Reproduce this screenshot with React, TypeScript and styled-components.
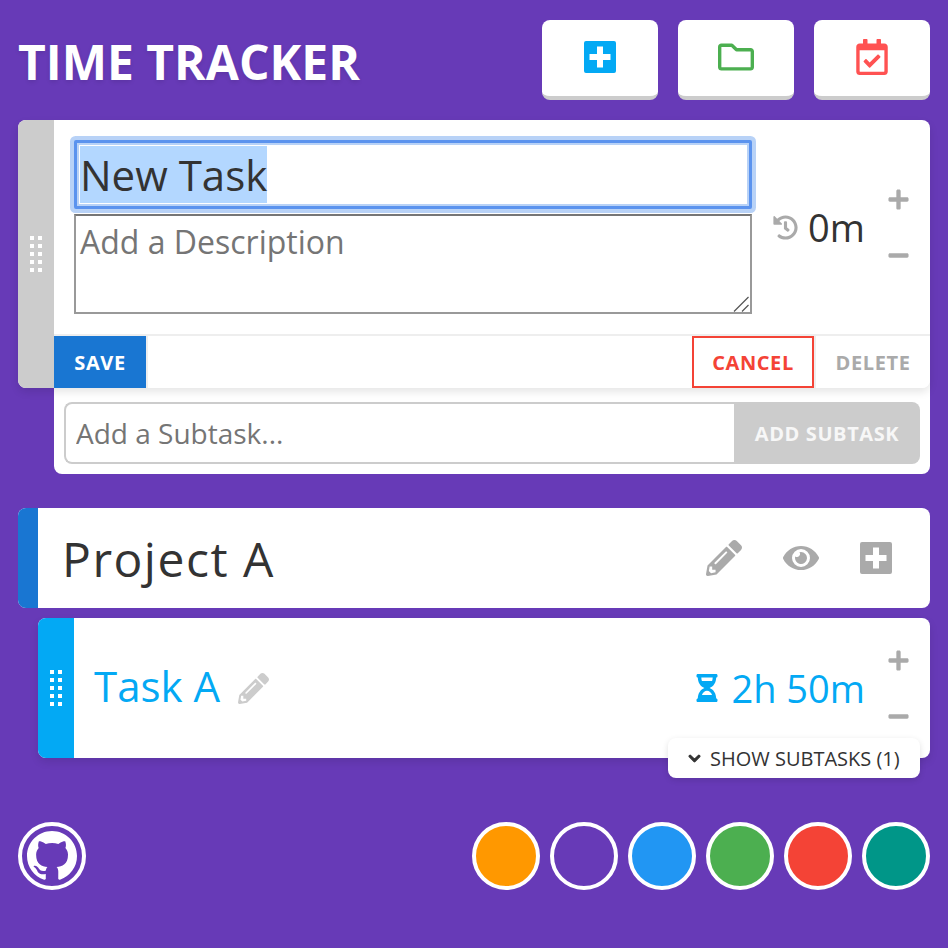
import React, { useEffect, useRef } from 'react';
import styled, { createGlobalStyle } from 'styled-components';
import {
  FaRegFolder,
  FaRegCalendarCheck,
  FaHistory,
  FaPlus,
  FaMinus,
  FaPencilAlt,
  FaEye,
  FaHourglassHalf,
  FaChevronDown,
} from 'react-icons/fa';

const SWATCHES = ['#ff9800', '#673ab7', '#2196f3', '#4caf50', '#f44336', '#009688'];

const GITHUB_MARK =
  'M8 0C3.58 0 0 3.58 0 8c0 3.54 2.29 6.53 5.47 7.59.4.07.55-.17.55-.38 0-.19-.01-.82-.01-1.49-2.01.37-2.53-.49-2.69-.94-.09-.23-.48-.94-.82-1.13-.28-.15-.68-.52-.01-.53.63-.01 1.08.58 1.23.82.72 1.21 1.87.87 2.33.66.07-.52.28-.87.51-1.07-1.78-.2-3.64-.89-3.64-3.95 0-.87.31-1.59.82-2.15-.08-.2-.36-1.02.08-2.12 0 0 .67-.21 2.2.82.64-.18 1.32-.27 2-.27.68 0 1.36.09 2 .27 1.53-1.04 2.2-.82 2.2-.82.44 1.1.16 1.92.08 2.12.51.56.82 1.27.82 2.15 0 3.07-1.87 3.75-3.65 3.95.29.25.54.73.54 1.48 0 1.07-.01 1.93-.01 2.2 0 .21.15.46.55.38A8.013 8.013 0 0016 8c0-4.42-3.58-8-8-8z';

const PLUS_SQUARE =
  'M2 0h28a2 2 0 012 2v28a2 2 0 01-2 2H2a2 2 0 01-2-2V2a2 2 0 012-2zM13 5.5v7.5H5.5v6H13v7.5h6V19h7.5v-6H19V5.500z';

const PlusSquare: React.FC = () => (
  <svg viewBox="0 0 32 32" width="32" height="32" fill="currentColor">
    <path fillRule="evenodd" d={PLUS_SQUARE} />
  </svg>
);

const App: React.FC = () => {
  const titleRef = useRef<HTMLInputElement>(null);

  useEffect(() => {
    titleRef.current?.focus();
    titleRef.current?.select();
  }, []);

  return (
    <Page>
      <GlobalStyle />
      <Header>
        <Title>TIME TRACKER</Title>
        <HeaderButtons>
          <HeaderButton $color="#03a9f4">
            <PlusSquare />
          </HeaderButton>
          <HeaderButton $color="#4caf50">
            <FaRegFolder />
          </HeaderButton>
          <HeaderButton $color="#ff5252">
            <FaRegCalendarCheck />
          </HeaderButton>
        </HeaderButtons>
      </Header>

      <EditGroup>
        <EditCard>
          <Handle $color="#ccc" $width={36}>
            <DragDots />
          </Handle>
          <EditBody>
            <EditMain>
              <Fields>
                <TitleInput ref={titleRef} defaultValue="New Task" />
                <DescriptionWrap>
                  <Description placeholder="Add a Description" />
                  <ResizeGrip viewBox="0 0 16 16" width="16" height="16">
                    <path d="M1 15.5 15.5 1M9 15.5l6.5-6.5" />
                  </ResizeGrip>
                </DescriptionWrap>
              </Fields>
              <TimeBox>
                <HistoryIcon />
                <TimeText>0m</TimeText>
                <Stepper />
              </TimeBox>
            </EditMain>
            <ActionBar>
              <SaveButton>SAVE</SaveButton>
              <CancelButton>CANCEL</CancelButton>
              <DeleteButton>DELETE</DeleteButton>
            </ActionBar>
          </EditBody>
        </EditCard>
        <SubtaskPanel>
          <SubtaskForm>
            <SubtaskInput placeholder="Add a Subtask..." />
            <SubtaskButton>ADD SUBTASK</SubtaskButton>
          </SubtaskForm>
        </SubtaskPanel>
      </EditGroup>

      <ProjectCard>
        <Handle $color="#1976d2" $width={20} />
        <ProjectName>Project A</ProjectName>
        <ProjectIcons>
          <FaPencilAlt />
          <FaEye />
          <PlusSquare />
        </ProjectIcons>
      </ProjectCard>

      <TaskCard>
        <Handle $color="#03a9f4" $width={36}>
          <DragDots />
        </Handle>
        <TaskBody>
          <TaskName>Task A</TaskName>
          <TaskEdit />
          <TaskTime>
            <FaHourglassHalf />
            <TimeText $color="#03a9f4">2h 50m</TimeText>
          </TaskTime>
          <Stepper />
        </TaskBody>
        <ShowSubtasks>
          <FaChevronDown />
          SHOW SUBTASKS (1)
        </ShowSubtasks>
      </TaskCard>

      <Footer>
        <GithubLink>
          <svg viewBox="0 0 16 16" width="50" height="50" fill="currentColor">
            <path fillRule="evenodd" d={GITHUB_MARK} />
          </svg>
        </GithubLink>
        <Swatches>
          {SWATCHES.map((color) => (
            <Swatch key={color} $color={color} />
          ))}
        </Swatches>
      </Footer>
    </Page>
  );
};

const DragDots: React.FC = () => (
  <DotGrid>
    {Array.from({ length: 10 }, (_, i) => (
      <Dot key={i} />
    ))}
  </DotGrid>
);

const Stepper: React.FC = () => (
  <StepperBox>
    <FaPlus />
    <FaMinus />
  </StepperBox>
);

export default App;

const GlobalStyle = createGlobalStyle`
  html, body {
    margin: 0;
    padding: 0;
    background: #673ab7;
    font-family: "Open Sans", "Liberation Sans", sans-serif;
    color: #333;
  }
  * {
    box-sizing: border-box;
  }
  ::selection {
    background: #b3d7ff;
  }
`;

const Page = styled.div`
  width: 948px;
  height: 948px;
  padding: 20px 18px 0;
  overflow: hidden;
  background: #673ab7;
`;

const Header = styled.header`
  display: flex;
  justify-content: space-between;
  align-items: flex-start;
  height: 100px;
`;

const Title = styled.h1`
  margin: 0;
  font-size: 48px;
  line-height: 84px;
  font-weight: 700;
  color: #fff;
  text-shadow: 0 2px 4px rgba(0, 0, 0, 0.1);
`;

const HeaderButtons = styled.div`
  display: flex;
  gap: 20px;
`;

const HeaderButton = styled.button<{ $color: string }>`
  display: flex;
  align-items: center;
  justify-content: center;
  width: 116px;
  height: 80px;
  padding: 0 0 3px;
  background: #fff;
  border: 0;
  border-bottom: 4px solid #ccc;
  border-radius: 8px;
  color: ${(p) => p.$color};
  font-size: 36px;

  svg {
    display: block;
  }
`;

const EditGroup = styled.section`
  margin-bottom: 34px;
`;

const EditCard = styled.div`
  position: relative;
  z-index: 1;
  display: flex;
  height: 268px;
  background: #fff;
  border-radius: 8px;
  overflow: hidden;
  box-shadow: 0 4px 8px rgba(0, 0, 0, 0.1);
`;

const Handle = styled.div<{ $color: string; $width: number }>`
  display: flex;
  align-items: center;
  justify-content: center;
  flex: none;
  width: ${(p) => p.$width}px;
  align-self: stretch;
  background: ${(p) => p.$color};
`;

const DotGrid = styled.div`
  display: grid;
  grid-template-columns: 4px 4px;
  grid-auto-rows: 4px;
  gap: 4px;
`;

const Dot = styled.span`
  background: #fff;
`;

const EditBody = styled.div`
  display: flex;
  flex-direction: column;
  flex: 1;
  min-width: 0;
`;

const EditMain = styled.div`
  display: flex;
  flex: 1;
  padding: 20px 0 0 20px;
  border-bottom: 2px solid #eee;
`;

const Fields = styled.div`
  display: flex;
  flex-direction: column;
  gap: 5px;
  width: 678px;
`;

const TitleInput = styled.input`
  width: 100%;
  height: 69px;
  padding: 0 3px;
  border: 3px solid #5b93ee;
  border-radius: 2px;
  outline: none;
  box-shadow: 0 0 0 4px #b8d2f7, inset 0 0 0 2px #b8d2f7;
  font-family: inherit;
  font-size: 42px;
  color: #333;
`;

const DescriptionWrap = styled.div`
  position: relative;
`;

const Description = styled.textarea`
  display: block;
  width: 100%;
  height: 100px;
  padding: 4px 4px 0;
  border: 2px solid #999;
  border-top-color: #767676;
  border-radius: 0;
  outline: none;
  resize: none;
  font-family: inherit;
  font-size: 32px;
  color: #333;

  &::placeholder {
    color: #757575;
  }
`;

const ResizeGrip = styled.svg`
  position: absolute;
  right: 3px;
  bottom: 2px;
  fill: none;
  stroke: #555;
  stroke-width: 1.2;
`;

const TimeBox = styled.div`
  display: flex;
  align-items: center;
  flex: 1;
  min-width: 0;
  height: 140px;
  margin-top: 17px;
  padding-left: 21px;
`;

const HistoryIcon = styled(FaHistory)`
  flex: none;
  margin-right: 10px;
  font-size: 25px;
  color: #aaa;
`;

const TimeText = styled.span<{ $color?: string }>`
  font-size: 38px;
  color: ${(p) => p.$color ?? '#333'};
`;

const StepperBox = styled.div`
  display: flex;
  flex-direction: column;
  justify-content: space-between;
  align-items: center;
  margin-left: 22px;
  margin-right: 20px;
  height: 79px;
  font-size: 23px;
  color: #aaa;
`;

const ActionBar = styled.div`
  display: flex;
  height: 52px;
  font-size: 20px;
  font-weight: 700;
  letter-spacing: 0.6px;
`;

const ActionButton = styled.button`
  height: 100%;
  padding: 0;
  border: 0;
  background: #fff;
  font-family: inherit;
  font-size: inherit;
  font-weight: inherit;
  letter-spacing: inherit;
`;

const SaveButton = styled(ActionButton)`
  width: 94px;
  margin-right: auto;
  border-right: 2px solid #eee;
  background: #1976d2;
  background-clip: padding-box;
  color: #fff;
`;

const CancelButton = styled(ActionButton)`
  width: 122px;
  border: 2px solid #f44336;
  color: #f44336;
`;

const DeleteButton = styled(ActionButton)`
  width: 116px;
  border-left: 2px solid #eee;
  color: #aaa;
`;

const SubtaskPanel = styled.div`
  margin: -10px 0 0 36px;
  padding: 24px 10px 10px;
  background: #fff;
  border-radius: 0 0 8px 8px;
`;

const SubtaskForm = styled.div`
  display: flex;
  height: 62px;
`;

const SubtaskInput = styled.input`
  flex: 1;
  min-width: 0;
  padding: 0 10px;
  border: 2px solid #ccc;
  border-right: 0;
  border-radius: 8px 0 0 8px;
  outline: none;
  font-family: inherit;
  font-size: 28px;

  &::placeholder {
    color: #757575;
  }
`;

const SubtaskButton = styled.button`
  width: 186px;
  border: 0;
  border-radius: 0 8px 8px 0;
  background: #ccc;
  color: #f7f7f7;
  font-family: inherit;
  font-size: 20px;
  font-weight: 700;
  letter-spacing: 0.6px;
`;

const ProjectCard = styled.div`
  display: flex;
  align-items: center;
  height: 100px;
  background: #fff;
  border-radius: 8px;
  overflow: hidden;
`;

const ProjectName = styled.h2`
  flex: 1;
  margin: 0 0 0 24px;
  font-size: 48px;
  font-weight: 400;
  letter-spacing: 1.5px;
  color: #333;
`;

const ProjectIcons = styled.div`
  display: flex;
  align-items: center;
  gap: 41px;
  margin-right: 38px;
  font-size: 36px;
  color: #aaa;
`;

const TaskCard = styled.div`
  position: relative;
  display: flex;
  height: 140px;
  margin: 10px 0 0 20px;
  background: #fff;
  border-radius: 8px;
  box-shadow: 0 4px 8px rgba(0, 0, 0, 0.1);

  > ${Handle} {
    border-radius: 8px 0 0 8px;
  }
`;

const TaskBody = styled.div`
  display: flex;
  align-items: center;
  flex: 1;
  padding-left: 20px;
`;

const TaskName = styled.span`
  margin-top: -6px;
  font-size: 42px;
  color: #03a9f4;
`;

const TaskEdit = styled(FaPencilAlt)`
  margin-left: 18px;
  font-size: 31px;
  color: #ccc;
`;

const TaskTime = styled.div`
  display: flex;
  align-items: center;
  gap: 10px;
  margin-left: auto;
  color: #03a9f4;
  font-size: 28px;
`;

const ShowSubtasks = styled.button`
  position: absolute;
  right: 10px;
  bottom: -20px;
  display: flex;
  align-items: center;
  gap: 9px;
  width: 252px;
  height: 40px;
  padding: 0 0 0 20px;
  border: 0;
  border-radius: 8px;
  background: #fff;
  box-shadow: 0 2px 6px rgba(0, 0, 0, 0.12);
  font-family: inherit;
  font-size: 20px;
  color: #333;

  svg {
    font-size: 13px;
    stroke: currentColor;
    stroke-width: 40;
  }
`;

const Footer = styled.footer`
  display: flex;
  justify-content: space-between;
  align-items: center;
  margin-top: 64px;
`;

const GithubLink = styled.a`
  display: flex;
  align-items: center;
  justify-content: center;
  width: 68px;
  height: 68px;
  border: 4px solid #fff;
  border-radius: 50%;
  color: #fff;
`;

const Swatches = styled.div`
  display: flex;
  gap: 10px;
`;

const Swatch = styled.button<{ $color: string }>`
  width: 68px;
  height: 68px;
  padding: 0;
  border: 4px solid #fff;
  border-radius: 50%;
  background: ${(p) => p.$color};
`;
